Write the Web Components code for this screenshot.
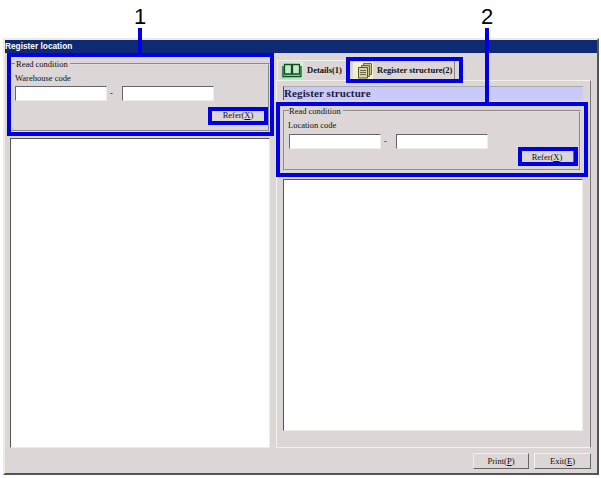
<!DOCTYPE html>
<html>
<head>
<meta charset="utf-8">
<title>Register location</title>
<style>
	html, body { margin: 0; padding: 0; background: #fff; }
	body { width: 601px; height: 478px; overflow: hidden; position: relative; font: 8.5px "Liberation Serif", serif; color: #111; }
</style>
</head>
<body>
<app-window heading="Register location">
	<div slot="left">
		<read-condition label="Warehouse code" style="--group-h:73px; --field-gap:2px; --action-gap:6px; --legend-pad:1px"></read-condition>
		<list-box style="margin-top:6px; height:310px"></list-box>
	</div>
	<tab-panel slot="right">
		<section-bar>Register structure</section-bar>
		<read-condition label="Location code" style="--group-h:65px; --field-gap:3px; --action-gap:0px; --label-shift:-1px; --pad-left:4px; --pad-right:5px; margin-top:6px; margin-right:2px"></read-condition>
		<list-box style="margin-top:8px; height:252px"></list-box>
	</tab-panel>
	<win-button slot="foot" style="--w:56px">Print(<u>P</u>)</win-button>
	<win-button slot="foot" style="--w:57px">Exit(<u>E</u>)</win-button>
</app-window>

<call-out style="left:7px; top:53px; width:267px; height:83px"></call-out>
<call-out style="left:208px; top:107px; width:60px; height:18px"></call-out>
<call-out style="left:346px; top:57px; width:117px; height:26px"></call-out>
<call-out style="left:276px; top:102px; width:312px; height:75px"></call-out>
<call-out style="left:518px; top:147px; width:60px; height:19px"></call-out>
<call-number style="left:132px; top:4px; --line:25px">1</call-number>
<call-number style="left:479px; top:4px; --line:74px">2</call-number>

<script>
const face = "#dcd6d6";

class AppWindow extends HTMLElement {
	constructor() {
		super();
		this.attachShadow({ mode: "open" });
		this.shadowRoot.innerHTML = `
			<div class="title">${this.getAttribute("heading")}</div>
			<div class="main">
				<div class="left"><slot name="left"></slot></div>
				<div class="right"><slot name="right"></slot></div>
			</div>
			<div class="foot"><slot name="foot"></slot></div>
			<style>
				:host {
					display: flex;
					flex-direction: column;
					box-sizing: border-box;
					position: absolute;
					inset: 38px 2px 3px 3px;
					background: ${face};
					border: 2px solid;
					border-color: #eeebe4 #555 #555 #eeebe4;
				}
				.title {
					height: 13px;
					background: #0e2a74;
					color: #fff;
					font: bold 8.3px/13px "Liberation Sans", sans-serif;
				}
				.main {
					display: flex;
					padding: 1px 0 0 3px;
				}
				.left { width: 260px; padding: 5px 0 0 2px; }
				.right { margin-left: 6px; width: 316px; }
				.foot {
					display: flex;
					justify-content: flex-end;
					gap: 5px;
					padding: 5px 6px 0 0;
				}
			</style>
		`;
	}
}

class ReadCondition extends HTMLElement {
	constructor() {
		super();
		this.attachShadow({ mode: "open" });
		this.shadowRoot.innerHTML = `
			<fieldset>
				<legend>Read condition</legend>
				<div class="label">${this.getAttribute("label")}</div>
				<div class="fields">
					<div class="field"></div><span>-</span><div class="field"></div>
				</div>
				<div class="actions"><win-button style="--w:54px">Refer(<u>X</u>)</win-button></div>
			</fieldset>
			<style>
				:host { display: block; }
				fieldset {
					box-sizing: border-box;
					height: var(--group-h);
					margin: 0;
					padding: 0 var(--pad-right, 3px) 0 var(--pad-left, 3px);
					border: 2px groove #e0dcdc;
				}
				legend {
					margin: 0;
					padding: 0 2px 0 var(--legend-pad, 0);
					line-height: 10px;
				}
				.label {
					margin: 4px 0 0 var(--label-shift, 0);
					line-height: 11px;
				}
				.fields {
					display: flex;
					align-items: center;
					margin-top: var(--field-gap);
				}
				.field {
					width: 92px;
					height: 15px;
					box-sizing: border-box;
					background: #fff;
					border: 1px solid;
					border-color: #666 #f0eee8 #f0eee8 #666;
				}
				span { width: 12px; padding-left: 3px; line-height: 15px; }
				.actions { display: flex; justify-content: flex-end; margin-top: var(--action-gap); }
			</style>
		`;
	}
}

class WinButton extends HTMLElement {
	constructor() {
		super();
		this.attachShadow({ mode: "open" });
		this.shadowRoot.innerHTML = `
			<slot></slot>
			<style>
				:host {
					display: flex;
					align-items: center;
					justify-content: center;
					box-sizing: border-box;
					width: var(--w, 54px);
					height: 16px;
					background: ${face};
					border: 1px solid;
					border-color: #f2f0ea #666 #666 #f2f0ea;
					font: 8.5px "Liberation Serif", serif;
					color: #111;
				}
			</style>
		`;
	}
}

class ListBox extends HTMLElement {
	constructor() {
		super();
		this.attachShadow({ mode: "open" });
		this.shadowRoot.innerHTML = `
			<style>
				:host {
					display: block;
					box-sizing: border-box;
					background: #fff;
					border: 1px solid;
					border-color: #555 #eeebe4 #eeebe4 #555;
				}
			</style>
		`;
	}
}

class SectionBar extends HTMLElement {
	constructor() {
		super();
		this.attachShadow({ mode: "open" });
		this.shadowRoot.innerHTML = `
			<slot></slot>
			<style>
				:host {
					display: block;
					height: 14px;
					box-sizing: border-box;
					background: #c9c9fa;
					border-left: 1px solid #555;
					border-top: 1px solid #aaa;
					font: bold 11px/13px "Liberation Serif", serif;
					letter-spacing: 0.1px;
					color: #1c1c3c;
				}
			</style>
		`;
	}
}

class TabPanel extends HTMLElement {
	constructor() {
		super();
		this.attachShadow({ mode: "open" });
		this.shadowRoot.innerHTML = `
			<div class="tabs">
				<div class="tab first">
					<svg width="22" height="17" viewBox="0 0 22 17">
						<defs>
							<linearGradient id="g" x1="0" x2="1" y1="1" y2="0">
								<stop offset="0" stop-color="#9fdcae"/>
								<stop offset="1" stop-color="#e4f4e0"/>
							</linearGradient>
						</defs>
						<rect width="22" height="17" fill="url(#g)"/>
						<path d="M3.500 2.500H10.500V12H3.500ZM11.500 2.500H18.500V12H11.500Z" fill="#c6ebc4" stroke="#0d4f2a" stroke-width="1.300"/>
						<path d="M2 4V14.500H20V4" fill="none" stroke="#0d4f2a" stroke-width="1.300"/>
					</svg>
					<b>Details(1)</b>
				</div>
				<div class="tab second">
					<svg width="20" height="17" viewBox="0 0 20 17">
						<defs>
							<linearGradient id="y" x1="0" x2="1" y1="1" y2="0">
								<stop offset="0" stop-color="#efeebc"/>
								<stop offset="1" stop-color="#f8f6dc"/>
							</linearGradient>
						</defs>
						<rect width="20" height="17" fill="url(#y)"/>
						<path d="M10.500 1.500H18.500V12.500H10.500Z" fill="#c8c490" stroke="#6a6a48"/>
						<path d="M8.500 3.500H16.500V14.500H8.500Z" fill="#c8c490" stroke="#6a6a48"/>
						<path d="M5.500 5.500H14.500V16H5.500Z" fill="#d8d4a8" stroke="#55553a"/>
						<path d="M7 8.500H13M7 10.500H13M7 12.500H13" stroke="#6a6a48"/>
					</svg>
					<b>Register structure(2)</b>
				</div>
			</div>
			<div class="panel"><slot></slot></div>
			<style>
				:host { display: block; }
				.tabs {
					display: flex;
					height: 20px;
					padding: 6px 0 0 1px;
					gap: 1px;
				}
				.tab {
					display: flex;
					align-items: center;
					box-sizing: border-box;
					height: 20px;
					gap: 4px;
					border: 1px solid #f2f0ea;
					border-bottom: 0;
					border-right-color: #888;
				}
				.first { width: 70px; padding-left: 3px; }
				.second { padding: 0 2px 0 4px; }
				svg { flex: none; }
				b { font: bold 8.5px "Liberation Serif", serif; white-space: nowrap; margin-top: -2px; }
				.panel {
					box-sizing: border-box;
					width: 315px;
					height: 368px;
					padding: 5px 7px 0 6px;
					border: 1px solid;
					border-color: #f2f0ea #777 #f2f0ea #f2f0ea;
				}
			</style>
		`;
	}
}

class CallOut extends HTMLElement {
	constructor() {
		super();
		this.attachShadow({ mode: "open" });
		this.shadowRoot.innerHTML = `
			<style>
				:host {
					position: absolute;
					box-sizing: border-box;
					border: 4px solid #0000e6;
				}
			</style>
		`;
	}
}

class CallNumber extends HTMLElement {
	constructor() {
		super();
		this.attachShadow({ mode: "open" });
		this.shadowRoot.innerHTML = `
			<div class="num"><slot></slot></div>
			<div class="line"></div>
			<style>
				:host {
					position: absolute;
					display: block;
					width: 16px;
				}
				.num {
					height: 24px;
					text-align: center;
					font: 22px/25px "Liberation Sans", sans-serif;
					color: #000;
				}
				.line {
					width: 4px;
					height: var(--line);
					margin-left: 6px;
					background: #0000e6;
				}
			</style>
		`;
	}
}

customElements.define("win-button", WinButton);
customElements.define("read-condition", ReadCondition);
customElements.define("list-box", ListBox);
customElements.define("section-bar", SectionBar);
customElements.define("tab-panel", TabPanel);
customElements.define("app-window", AppWindow);
customElements.define("call-out", CallOut);
customElements.define("call-number", CallNumber);
</script>
</body>
</html>
